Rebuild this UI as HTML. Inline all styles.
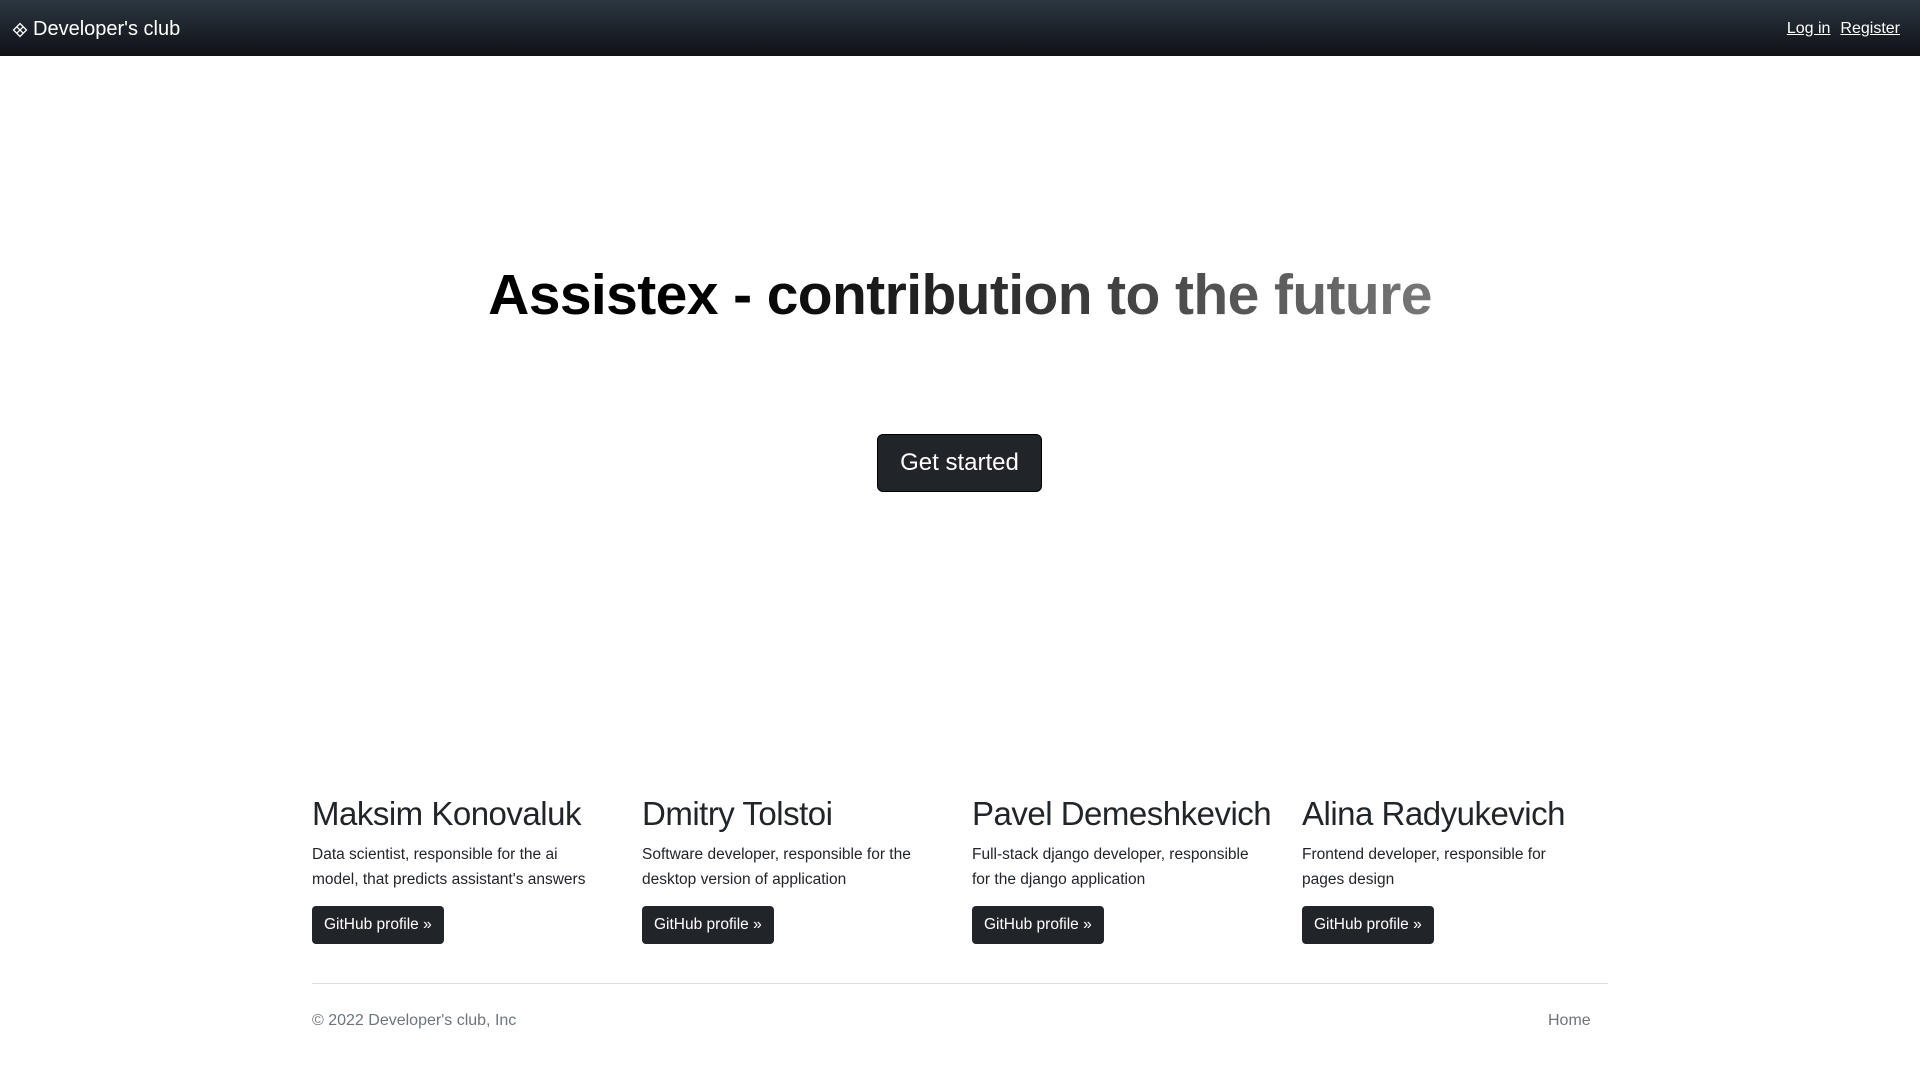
<!DOCTYPE html>
<html><head><meta charset="utf-8"><style>
*{margin:0;padding:0;box-sizing:border-box}
body{width:1920px;height:1080px;background:#fff;font-family:"Liberation Sans","DejaVu Sans",sans-serif;color:#212529;position:relative;overflow:hidden}
.nav{position:absolute;left:0;top:0;width:1920px;height:56px;background:linear-gradient(#2c3741,#0e1015)}
.brand{position:absolute;left:12px;top:18px;color:#fff;font-size:20px;display:flex;align-items:center;gap:5px}
.links{position:absolute;right:20px;top:20px;font-size:16px;color:#fff}
.links span{text-decoration:underline;margin-left:10px}
h1{position:absolute;left:0;width:1920px;top:262px;text-align:center;font-size:57px;font-weight:bold;letter-spacing:-0.6px}
h1 span{background:linear-gradient(90deg,#000 25%,#777 100%);-webkit-background-clip:text;background-clip:text;color:transparent}
.cta{position:absolute;left:877px;top:434px;width:165px;height:58px;background:#212529;color:#fff;border-radius:6px;font-size:24px;display:flex;align-items:center;justify-content:center;border:1px solid #000}
.col{position:absolute;top:795px;width:320px}
.col h2{font-size:33px;font-weight:normal;height:48px;letter-spacing:-.5px}
.col p{font-size:15.5px;line-height:24.5px;margin-top:0}
.col .b{margin-top:14px;display:inline-block;background:#212529;color:#fff;border-radius:4px;height:38px;line-height:38px;padding:0 12px;font-size:15.5px}
hr{position:absolute;left:312px;top:983px;width:1296px;border:0;border-top:1px solid #ddd}
.f{position:absolute;top:1012px;font-size:16px;color:#6c757d}
</style></head><body>
<div class="nav"><div class="brand"><svg width="16" height="16" viewBox="0 0 16 16"><g fill="none" stroke="#fff" stroke-width="1.3"><path d="M8 1.5L14.5 8 8 14.5 1.5 8z"/><path d="M4.8 4.8L11.2 11.2M11.2 4.8L4.8 11.2"/></g></svg>Developer's club</div>
<div class="links"><span>Log in</span><span>Register</span></div></div>
<h1><span>Assistex - contribution to the future</span></h1>
<div class="cta">Get started</div>
<div class="col" style="left:312px"><h2>Maksim Konovaluk</h2><p>Data scientist, responsible for the ai<br>model, that predicts assistant's answers</p><span class="b">GitHub profile »</span></div>
<div class="col" style="left:642px"><h2>Dmitry Tolstoi</h2><p>Software developer, responsible for the<br>desktop version of application</p><span class="b">GitHub profile »</span></div>
<div class="col" style="left:972px"><h2>Pavel Demeshkevich</h2><p>Full-stack django developer, responsible<br>for the django application</p><span class="b">GitHub profile »</span></div>
<div class="col" style="left:1302px"><h2>Alina Radyukevich</h2><p>Frontend developer, responsible for<br>pages design</p><span class="b">GitHub profile »</span></div>
<hr>
<div class="f" style="left:312px">© 2022 Developer's club, Inc</div>
<div class="f" style="left:1548px">Home</div>
</body></html>
